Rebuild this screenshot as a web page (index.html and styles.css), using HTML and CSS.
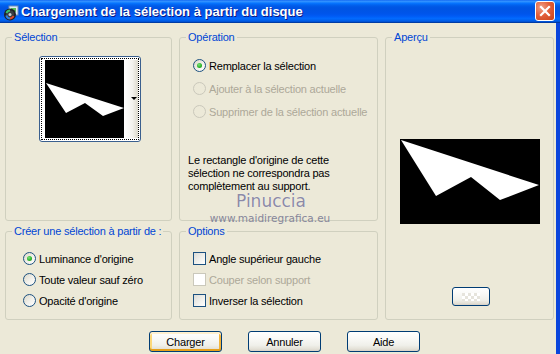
FILE: index.html
```html
<!DOCTYPE html>
<html lang="fr">
<head>
<meta charset="utf-8">
<title>Chargement de la sélection à partir du disque</title>
<link rel="stylesheet" href="styles.css">
</head>
<body>
<div class="window">
  <div class="titlebar">
    <svg class="app-icon" width="16" height="16" viewBox="0 0 16 16">
      <rect x="6" y="1" width="9" height="9" fill="#dfe9f5" stroke="#6f8fb5" stroke-width="1"/>
      <rect x="8" y="3" width="5" height="4" fill="#5bbf5b"/>
      <circle cx="7" cy="9.5" r="6" fill="#202428"/>
      <circle cx="7" cy="9.5" r="4" fill="#3a3f44"/>
      <path d="M3.5 8 A4 4 0 0 1 7 5.5" stroke="#39c06a" stroke-width="2" fill="none"/>
      <path d="M10.5 11 A4 4 0 0 1 7 13.5" stroke="#e04a30" stroke-width="2" fill="none"/>
      <path d="M7 13.5 A4 4 0 0 1 3.3 10.5" stroke="#2f7fe0" stroke-width="2" fill="none"/>
      <circle cx="7" cy="9.5" r="1.5" fill="#c8d0d8"/>
    </svg>
    <span class="title">Chargement de la sélection à partir du disque</span>
    <button class="close" aria-label="Fermer">
      <svg width="12" height="12" viewBox="0 0 12 12"><path d="M2 2 L10 10 M10 2 L2 10" stroke="#fff" stroke-width="2.2" stroke-linecap="square"/></svg>
    </button>
  </div>

  <div class="client">
    <div class="groups">
      <fieldset class="group g-selection">
        <legend>Sélection</legend>
        <div class="thumb">
          <div class="thumb-focus">
            <svg class="thumb-img" width="79" height="78" viewBox="0 0 79 78">
              <rect width="79" height="78" fill="#000"/>
              <polygon points="1,23 79,48 58,56 40,43 21,53" fill="#fff"/>
            </svg>
            <div class="thumb-strip"><span class="arrow"></span></div>
          </div>
        </div>
      </fieldset>

      <fieldset class="group g-operation">
        <legend>Opération</legend>
        <div class="list op-list">
          <label class="opt"><span class="radio checked"></span>Remplacer la sélection</label>
          <label class="opt disabled"><span class="radio"></span>Ajouter à la sélection actuelle</label>
          <label class="opt disabled"><span class="radio"></span>Supprimer de la sélection actuelle</label>
        </div>
        <p class="note">Le rectangle d'origine de cette<br>sélection ne correspondra pas<br>complètement au support.</p>
      </fieldset>

      <fieldset class="group g-preview">
        <legend>Aperçu</legend>
        <svg class="preview" width="140" height="85" viewBox="0 0 140 85">
          <rect width="140" height="85" fill="#000"/>
          <polygon points="1,1 139,46 100,61 71,38 36,57" fill="#fff"/>
        </svg>
        <button class="btn mini"><span class="checker"></span></button>
      </fieldset>

      <fieldset class="group g-create">
        <legend>Créer une sélection à partir de :</legend>
        <div class="list row-list create-list">
          <label class="opt"><span class="radio checked"></span>Luminance d'origine</label>
          <label class="opt"><span class="radio"></span>Toute valeur sauf zéro</label>
          <label class="opt"><span class="radio"></span>Opacité d'origine</label>
        </div>
      </fieldset>

      <fieldset class="group g-options">
        <legend>Options</legend>
        <div class="list row-list options-list">
          <label class="opt"><span class="check"></span>Angle supérieur gauche</label>
          <label class="opt disabled"><span class="check"></span>Couper selon support</label>
          <label class="opt"><span class="check"></span>Inverser la sélection</label>
        </div>
      </fieldset>
    </div>

    <div class="buttons">
      <button class="btn default">Charger</button>
      <button class="btn">Annuler</button>
      <button class="btn">Aide</button>
    </div>
  </div>

  <div class="watermark">
    <span class="wm-name">Pinuccia</span>
    <span class="wm-url">www.maidiregrafica.eu</span>
  </div>
</div>
</body>
</html>
```

FILE: styles.css
```css
html, body {
  margin: 0;
  padding: 0;
}
body {
  width: 560px;
  height: 354px;
  overflow: hidden;
  background: #ECE9D8;
  font-family: "Liberation Sans", Arial, sans-serif;
  font-size: 11px;
  letter-spacing: -0.2px;
  color: #000;
}
.window {
  position: relative;
  width: 560px;
  height: 354px;
  display: flex;
  flex-direction: column;
  background: #ECE9D8;
}

/* title bar */
.titlebar {
  height: 23px;
  flex: none;
  display: flex;
  align-items: center;
  background: linear-gradient(#0058EE 0%, #3A93FF 4%, #288EFF 8%, #127DFF 12%, #036FFC 16%, #0262EE 22%, #0057E5 30%, #0054E3 40%, #0055EB 60%, #005BF5 70%, #026AFE 80%, #0062EF 88%, #0052D6 94%, #0040AB 97%, #003092 100%);
}
.app-icon {
  margin-left: 3px;
  margin-top: 2px;
  flex: none;
}
.title {
  margin-left: 2px;
  color: #fff;
  font-weight: bold;
  font-size: 13px;
  letter-spacing: 0;
  text-shadow: 1px 1px 0 #0A1883;
  white-space: nowrap;
  flex: 1;
}
.close {
  width: 20px;
  height: 20px;
  margin: 0 5px 1px 0;
  padding: 0;
  border: 1px solid #fff;
  border-radius: 3px;
  background: radial-gradient(circle at 30% 30%, #F0A088 0%, #E2603C 45%, #CC4218 100%);
  display: flex;
  align-items: center;
  justify-content: center;
}

/* client area */
.client {
  flex: 1;
  padding: 7px 0 0 5px;
  border-right: 4px solid #0A45DC;
  box-shadow: inset -1px 0 0 #ECE9D8;
}
.groups {
  display: grid;
  grid-template-columns: 167px 199px 169px;
  grid-template-rows: 191px 96px;
  column-gap: 7px;
  row-gap: 3px;
}
.group {
  margin: 0;
  padding: 0;
  min-width: 0;
  box-sizing: border-box;
  height: 100%;
  border: 1px solid #D0D0BF;
  border-radius: 3px;
}
.group legend {
  margin-left: 6px;
  padding: 0 2px;
  line-height: 14px;
  color: #0046D5;
}
.g-selection { grid-column: 1; grid-row: 1; }
.g-operation { grid-column: 2; grid-row: 1; }
.g-preview   { grid-column: 3; grid-row: 1 / 3; }
.g-create    { grid-column: 1; grid-row: 2; }
.g-options   { grid-column: 2; grid-row: 2; }

/* selection thumbnail */
.thumb {
  margin: 12px 0 0 33px;
  width: 102px;
  height: 86px;
  box-sizing: border-box;
  padding: 1px;
  border: 1px solid #3A5F8E;
  border-radius: 3px;
  background: #fff;
}
.thumb-focus {
  height: 100%;
  box-sizing: border-box;
  border: 1px dotted #000;
  padding: 1px 0 0 3px;
  display: flex;
}
.thumb-img {
  display: block;
  flex: none;
}
.thumb-strip {
  flex: 1;
  height: 78px;
  background: linear-gradient(90deg, #fff 0%, #F4F3EE 60%, #DCD9CC 100%);
  display: flex;
  align-items: center;
  justify-content: flex-end;
  padding-right: 1px;
  padding-bottom: 2px;
  box-sizing: border-box;
}
.arrow {
  width: 0;
  height: 0;
  border-left: 3px solid transparent;
  border-right: 3px solid transparent;
  border-top: 3px solid #000;
}

/* option lists */
.list {
  display: flex;
  flex-direction: column;
}
.op-list {
  padding: 10px 0 0 13px;
}
.op-list .opt { height: 23px; }
.row-list .opt { height: 21px; }
.create-list { padding: 10px 0 0 17px; }
.options-list { padding: 10px 0 0 13px; }
.opt {
  display: flex;
  align-items: center;
  gap: 3px;
  white-space: nowrap;
}
.opt.disabled { color: #ACA899; }

.radio {
  width: 13px;
  height: 13px;
  box-sizing: border-box;
  border: 1px solid #1C5180;
  border-radius: 50%;
  background: linear-gradient(135deg, #DCD8C8 0%, #F2F1EC 55%, #fff 100%);
  display: inline-flex;
  align-items: center;
  justify-content: center;
  flex: none;
}
.radio.checked::after {
  content: "";
  width: 5px;
  height: 5px;
  border-radius: 50%;
  background: radial-gradient(circle at 40% 35%, #7CE27A 0%, #2DB52B 55%, #1A8F1A 100%);
}
.disabled .radio {
  border-color: #CAC8BB;
  background: #ECE9D8;
}
.check {
  width: 13px;
  height: 13px;
  box-sizing: border-box;
  border: 1px solid #1C5180;
  background: linear-gradient(135deg, #DCDCD7 0%, #F0F0EC 55%, #fff 100%);
  flex: none;
}
.disabled .check {
  border-color: #CAC8BB;
  background: #fff;
}

.note {
  margin: 31px 0 0 8px;
  line-height: 13px;
}

/* preview */
.preview {
  display: block;
  margin: 95px auto 0;
}

/* buttons */
.btn {
  font-family: "Liberation Sans", Arial, sans-serif;
  font-size: 11px;
  letter-spacing: -0.2px;
  color: #000;
  padding: 0;
  box-sizing: border-box;
  border: 1px solid #003C74;
  border-radius: 3px;
  background: linear-gradient(#FFFFFF 0%, #FAFAF8 30%, #F0F0EA 70%, #E3E0D6 90%, #D6D0C5 100%);
}
.buttons {
  display: flex;
  gap: 26px;
  margin: 11px 0 0 144px;
}
.buttons .btn {
  width: 73px;
  height: 21px;
}
.btn.default {
  box-shadow: inset 0 2px 0 #FFF0CF, inset 0 -2px 0 #E5A01A, inset 2px 0 0 #FBD87B, inset -2px 0 0 #F3B43C;
}
.mini {
  display: flex;
  align-items: center;
  justify-content: center;
  width: 38px;
  height: 19px;
  margin: 63px auto 0;
  position: relative;
  left: 1px;
}
.checker {
  width: 18px;
  height: 8px;
  background: repeating-conic-gradient(#FFFFFF 0 25%, #E6E4DC 0 50%) 0 0 / 6px 6px;
}

/* watermark overlay */
.watermark {
  position: absolute;
  left: 209px;
  top: 194px;
  width: 122px;
  display: flex;
  flex-direction: column;
  align-items: center;
  pointer-events: none;
  font-family: "DejaVu Sans", sans-serif;
  letter-spacing: 0;
}
.wm-name {
  font-size: 17px;
  line-height: 15px;
  color: #8C8AA6;
  text-shadow: 0 0 1px #fff;
  margin-left: 2px;
}
.wm-url {
  font-size: 10.5px;
  line-height: 11px;
  color: #86869A;
  margin-top: 4px;
}
```
